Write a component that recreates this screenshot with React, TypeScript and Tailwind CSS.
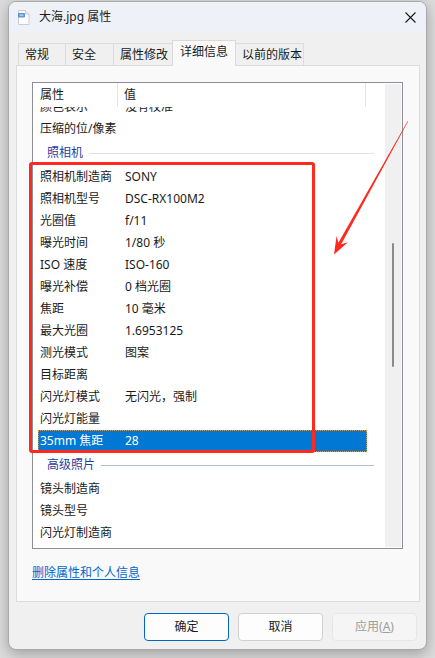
import type { ReactNode } from "react";

const FONT = "font-['Segoe_UI','Noto_Sans','Noto_Sans_CJK_SC',sans-serif]";

const TABS = [
  { label: "常规", w: "w-[48px]" },
  { label: "安全", w: "w-[49px]" },
  { label: "属性修改", w: "w-[60px]" },
  { label: "详细信息", w: "w-[64px]", active: true },
  { label: "以前的版本", w: "w-[69px]" }
];

const CAMERA: [string, string][] = [
  ["照相机制造商", "SONY"],
  ["照相机型号", "DSC-RX100M2"],
  ["光圈值", "f/11"],
  ["曝光时间", "1/80 秒"],
  ["ISO 速度", "ISO-160"],
  ["曝光补偿", "0 档光圈"],
  ["焦距", "10 毫米"],
  ["最大光圈", "1.6953125"],
  ["测光模式", "图案"],
  ["目标距离", ""],
  ["闪光灯模式", "无闪光，强制"],
  ["闪光灯能量", ""],
  ["35mm 焦距", "28"]
];

const ADVANCED = ["镜头制造商", "镜头型号", "闪光灯制造商"];

function Row({ name, value, selected = false }: { name: string; value?: string; selected?: boolean }) {
  return (
    <div
      className={
        selected
          ? "ml-[5px] flex h-[22px] w-[329px] items-center border border-dotted border-[#e8963a] bg-[#0078d4] text-white"
          : "ml-[5px] flex h-[22px] w-[329px] items-center border border-transparent text-[#1a1a1a]"
      }
    >
      <span className="w-[86px] shrink-0 pl-[1px] whitespace-nowrap">{name}</span>
      <span className="whitespace-nowrap">{value}</span>
    </div>
  );
}

function Group({ title, line }: { title: string; line: string }) {
  return (
    <div className="ml-[14px] flex h-[26px] w-[327px] items-center gap-[6px]">
      <span className="text-[#2b3d9c]">{title}</span>
      <div className={`h-px flex-1 ${line}`} />
    </div>
  );
}

function Button({ children, tone }: { children: ReactNode; tone: "primary" | "normal" | "disabled" }) {
  const cls = {
    primary: "border-[#0067c0] bg-[#fdfdfd] text-[#1a1a1a]",
    normal: "border-[#d0d0d0] bg-[#fdfdfd] text-[#1a1a1a]",
    disabled: "border-[#e6e6e6] bg-[#f5f5f5] text-[#9d9d9d]"
  }[tone];
  return (
    <div className={`flex h-[28px] w-[85px] items-center justify-center rounded-[4px] border ${cls}`}>
      {children}
    </div>
  );
}

function FileIcon() {
  return (
    <svg width="13" height="15" viewBox="0 0 13 15">
      <path d="M1.5 0.5h7l3.5 3.5v10.5h-10.5z" fill="#ffffff" stroke="#c9ccd3" />
      <path d="M8.5 0.5v3.5h3.5" fill="#e9ecf2" stroke="#c9ccd3" />
      <rect x="1" y="3" width="7" height="4.5" rx="1" fill="#5b8fd6" />
      <rect x="2.5" y="4.2" width="4" height="2" fill="#a9c8ef" />
    </svg>
  );
}

export default function App() {
  return (
    <div className={`relative h-[658px] w-[435px] overflow-hidden bg-[#dcdcdc] text-[12px] leading-[16px] ${FONT}`}>
      <div className="mt-px ml-[8px] flex h-[649px] w-[419px] flex-col overflow-hidden rounded-[8px] border border-[#a9a9a9] bg-[#f0f0f0] shadow-[0_4px_14px_rgba(0,0,0,0.28)]">
        {/* title bar */}
        <div className="flex h-[30px] shrink-0 items-center bg-[#eef2f8] pl-[8px] pr-[10px]">
          <FileIcon />
          <span className="ml-[9px] text-[#1a1a1a]">大海.jpg 属性</span>
          <svg className="ml-auto" width="11" height="11" viewBox="0 0 11 11">
            <path d="M0.5 0.5l10 10M10.5 0.5l-10 10" stroke="#1a1a1a" strokeWidth="1.1" />
          </svg>
        </div>

        <div className="flex flex-col pl-[7px] pr-[8px]">
          {/* tabs */}
          <div className="mt-[9px] flex h-[24px] items-end pl-[2px]">
            {TABS.map((t, i) =>
              t.active ? (
                <div
                  key={t.label}
                  className={`relative z-10 -mb-px -ml-px flex h-[26px] ${t.w} items-start border border-b-0 border-[#d9d9d9] bg-[#f9f9f9] pt-[3px] pl-[7px] text-[#1a1a1a]`}
                >
                  {t.label}
                </div>
              ) : (
                <div
                  key={t.label}
                  className={`flex h-[22px] ${t.w} ${i > 0 ? "-ml-px" : ""} items-center border border-b-0 border-[#dcdcdc] bg-[#f0f0f0] pl-[6px] text-[#1a1a1a]`}
                >
                  {t.label}
                </div>
              )
            )}
          </div>

          {/* tab panel */}
          <div className="flex h-[537px] w-[404px] flex-col border border-[#dcdcdc] bg-[#f9f9f9] pt-[16px] pl-[15px]">
            <div className="flex h-[467px] w-[371px] border border-[#8c8f96] bg-white">
              <div className="flex w-[352px] flex-col overflow-hidden">
                <div className="flex h-[24px] shrink-0 text-[#1a1a1a]">
                  <div className="flex w-[85px] items-center border-r border-[#e5e5e5] pl-[7px]">属性</div>
                  <div className="flex w-[248px] items-center border-r border-[#e5e5e5] pl-[6px]">值</div>
                </div>
                <div className="flex-1 overflow-hidden">
                  <div className="-mt-[11px] flex flex-col">
                    <Row name="颜色表示" value="没有校准" />
                    <Row name="压缩的位/像素" />
                    <Group title="照相机" line="bg-[#dde1ea]" />
                    {CAMERA.map(([n, v], i) => (
                      <Row key={n} name={n} value={v} selected={i === CAMERA.length - 1} />
                    ))}
                    <Group title="高级照片" line="bg-[#b4bdd6]" />
                    {ADVANCED.map((n) => (
                      <Row key={n} name={n} />
                    ))}
                  </div>
                </div>
              </div>
              <div className="my-px flex w-[16px] flex-col bg-[#f0f0f0] pt-[159px]">
                <div className="ml-[7px] h-[124px] w-[2px] rounded-full bg-[#8a8a8a]" />
              </div>
            </div>
            <a className="mt-[16px] w-fit text-[#0066cc] underline underline-offset-2">删除属性和个人信息</a>
          </div>

          {/* buttons */}
          <div className="mt-[11px] flex justify-end gap-[9px] pr-px">
            <Button tone="primary">确定</Button>
            <Button tone="normal">取消</Button>
            <Button tone="disabled">
              应用(<span className="underline">A</span>)
            </Button>
          </div>
        </div>
      </div>

      {/* red annotation */}
      <div className="absolute top-[162px] left-[29px] h-[291px] w-[286px] rounded-[3px] border-[3px] border-[#ff2a1f]" />
      <svg className="absolute top-0 left-0" width="435" height="658" viewBox="0 0 435 658">
        <polygon
          points="408.3,121.1 341.2,244.3 348,242.3 334,254.5 336.6,236 338.4,242.7 407.7,120.9"
          fill="#ff2a1f"
        />
      </svg>
    </div>
  );
}
